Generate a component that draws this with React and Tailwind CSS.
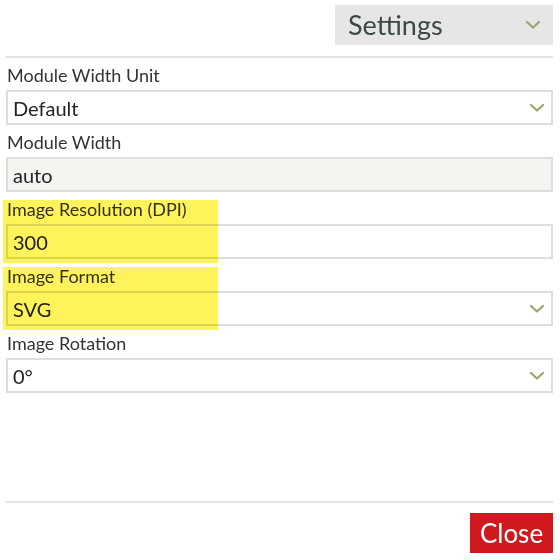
import React from "react";

function Chevron({ className }) {
  return (
    <svg viewBox="0 0 16 10" className={className} fill="none">
      <path d="M2 2 L8 7.5 L14 2" stroke="#9aa56c" strokeWidth="2.2" strokeLinecap="round" strokeLinejoin="round" />
    </svg>
  );
}

function Field({ label, value, select, disabled, highlight }) {
  return (
    <div className="relative">
      <div className="h-[32px] flex items-end pb-[6px] pl-[1px] text-[18px] leading-none text-[#333]">{label}</div>
      <div
        className={
          "h-[35px] border-2 border-[#dedede] flex items-center justify-between pl-[5px] pr-[6px] text-[20px] text-[#222] " +
          (disabled ? "bg-[#f4f4f1]" : "bg-white")
        }
      >
        <span>{value}</span>
        {select && <Chevron className="w-[16px] h-[10px]" />}
      </div>
      {highlight && (
        <div className="absolute left-[-3px] top-[8px] w-[215px] h-[63px] bg-[#fff35c] mix-blend-multiply pointer-events-none" />
      )}
    </div>
  );
}

export default function App() {
  return (
    <div className="w-[560px] h-[560px] bg-white pl-[6px] pr-[7px]" style={{ fontFamily: '"Lato", "Open Sans", sans-serif' }}>
      <div className="flex justify-end pt-[5px]">
        <div className="w-[218px] h-[40px] bg-[#e6e6e6] flex items-center justify-between pl-[13px] pr-[12px]">
          <span className="text-[27px] text-[#3b4944]">Settings</span>
          <Chevron className="w-[16px] h-[10px]" />
        </div>
      </div>
      <div className="mt-[11px] h-[2px] bg-[#e2e2e2]" />
      <Field label="Module Width Unit" value="Default" select />
      <Field label="Module Width" value="auto" disabled />
      <Field label="Image Resolution (DPI)" value="300" highlight />
      <Field label="Image Format" value="SVG" select highlight />
      <Field label="Image Rotation" value="0°" select />
      <div className="mt-[108px] h-[2px] bg-[#e2e2e2]" />
      <div className="flex justify-end mt-[10px]">
        <button className="w-[83px] h-[40px] bg-[#d0191f] text-white text-[26px] leading-none">Close</button>
      </div>
    </div>
  );
}
